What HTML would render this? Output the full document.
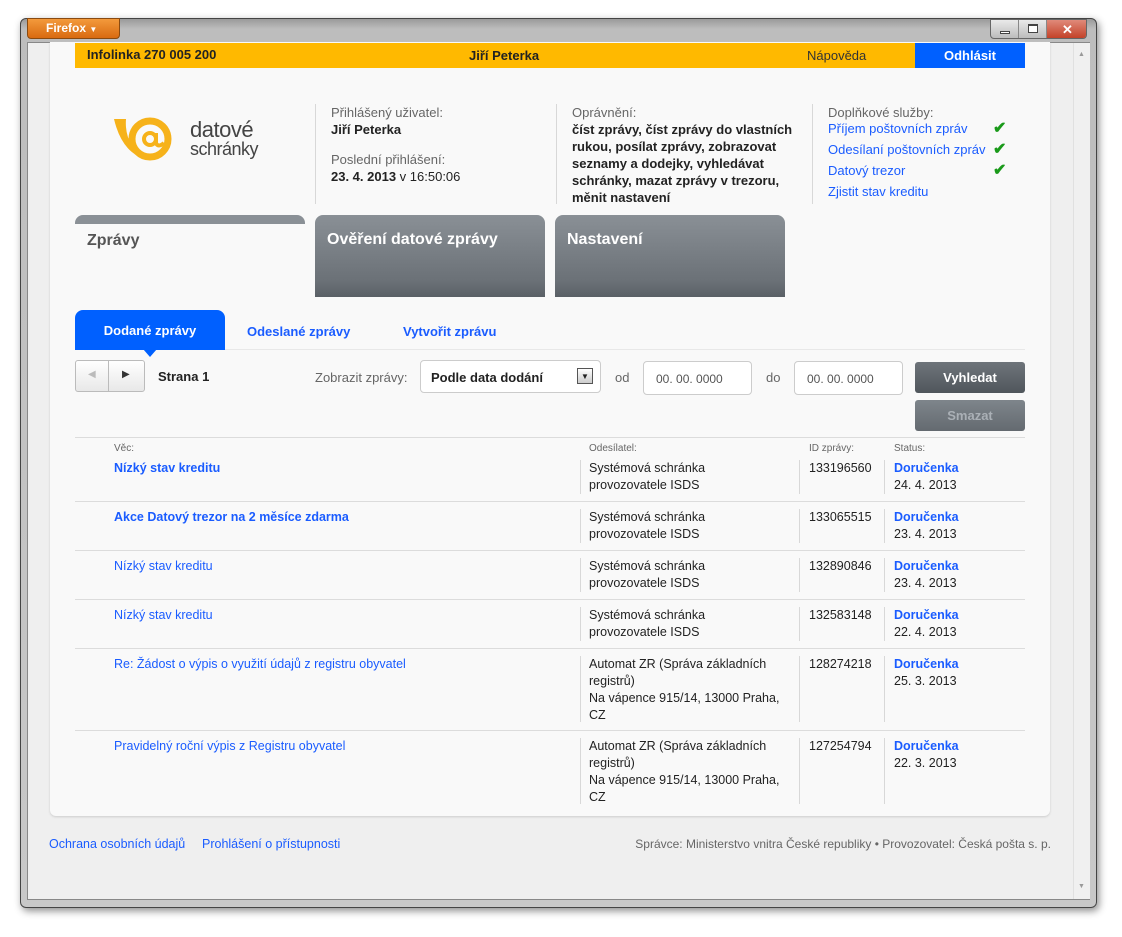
<!DOCTYPE html>
<html><head><meta charset="utf-8"><style>
*{margin:0;padding:0;box-sizing:border-box}
body{width:1122px;height:937px;background:#fff;font-family:"Liberation Sans",Arial,sans-serif;font-size:12px;position:relative;overflow:hidden;color:#222}
.a{position:absolute}
a,.l{color:#1a5cff;text-decoration:none}
.b{font-weight:bold}
.g{color:#666}
.vl{position:absolute;width:1px;background:#d8d8d8}
.hl{position:absolute;height:1px;background:#dcdcdc;left:75px;width:950px}
.tab{position:absolute;top:215px;height:82px;border-radius:8px 8px 0 0;background:linear-gradient(#8a9096,#6b7177 80%,#5a6066);color:#fff;font-size:16px;font-weight:bold;padding:16px 12px}
.inp{position:absolute;top:361px;height:34px;background:#fff;border:1px solid #ccc;border-radius:4px;font-size:12px;color:#555;padding:10px 12px}
.btn{position:absolute;left:915px;width:110px;height:31px;border-radius:3px;background:linear-gradient(#6e747a,#50565c);color:#fff;font-weight:bold;font-size:13px;text-align:center;line-height:31px}
.row{position:absolute;font-size:12.5px;line-height:17px;white-space:nowrap}
</style></head><body>
<div class="a" style="left:20px;top:18px;width:1077px;height:890px;border-radius:6px;background:linear-gradient(#9a9a9a,#bdbdbd 10px,#c8c8c8);border:1px solid #444;box-shadow:2px 3px 8px rgba(0,0,0,.45)"></div>
<div class="a" style="left:27px;top:18px;width:93px;height:21px;background:linear-gradient(#f39a3c,#d96a10);border:1px solid #8a4a10;border-radius:0 0 4px 4px;color:#fff;font-weight:bold;font-size:12px;padding:2px 0 0 18px">Firefox <span style="font-size:8px">▼</span></div>
<div class="a" style="left:990px;top:19px;width:97px;height:20px;border:1px solid #666;border-radius:0 0 4px 4px;background:linear-gradient(#eaeaea,#bcbcbc);overflow:hidden">
<div class="a" style="left:0;top:0;width:28px;height:20px;border-right:1px solid #888"><div class="a" style="left:9px;top:11px;width:10px;height:3px;border:1px solid #444;background:#fff"></div></div>
<div class="a" style="left:28px;top:0;width:28px;height:20px;border-right:1px solid #888"><div class="a" style="left:9px;top:4px;width:10px;height:9px;border:1px solid #444;border-top-width:2px;background:#fff"></div></div>
<div class="a" style="left:56px;top:0;width:41px;height:20px;background:linear-gradient(#e08a7a,#c03a20);color:#fff;text-align:center;font-weight:bold;font-size:13px;line-height:19px">✕</div></div>
<div class="a" style="left:27px;top:42px;width:1063px;height:858px;background:#efefef;border:1px solid #888"></div>
<div class="a" style="left:1073px;top:43px;width:17px;height:856px;background:#f0f0f0;border-left:1px solid #e0e0e0"><div class="a" style="left:4px;top:8px;font-size:7px;color:#999">▲</div><div class="a" style="left:4px;top:840px;font-size:7px;color:#999">▼</div></div>
<div class="a" style="left:50px;top:42px;width:1000px;height:774px;background:#f9f9f9;border-radius:0 0 6px 6px;box-shadow:0 1px 2px #ccc"></div>
<div class="a" style="left:75px;top:43px;width:950px;height:25px;background:#ffb900"></div>
<div class="a b" style="left:87px;top:47px;font-size:13px">Infolinka 270 005 200</div>
<div class="a b" style="left:469px;top:48px;font-size:13px">Jiří Peterka</div>
<div class="a" style="left:807px;top:48px;font-size:13px;color:#333">Nápověda</div>
<div class="a b" style="left:915px;top:43px;width:110px;height:25px;background:#0060ff;color:#fff;text-align:center;line-height:25px;font-size:13px">Odhlásit</div>
<svg class="a" style="left:112px;top:115px" width="80" height="50" viewBox="0 0 80 50">
<path d="M2 4 L14 4 Q12 30 34 44 Q10 38 2 4Z" fill="#f6b21a"/>
<circle cx="38" cy="24" r="18" fill="none" stroke="#f6b21a" stroke-width="7"/>
<circle cx="38" cy="24" r="6" fill="none" stroke="#f6b21a" stroke-width="4"/>
<path d="M44 18 L44 28 Q46 33 52 28" fill="none" stroke="#f6b21a" stroke-width="4"/>
</svg>
<div class="a" style="left:190px;top:117px;font-size:22px;color:#444;letter-spacing:-.5px">datové</div>
<div class="a" style="left:190px;top:139px;font-size:18px;color:#444;letter-spacing:-.5px">schránky</div>
<div class="vl" style="left:315px;top:104px;height:100px"></div>
<div class="vl" style="left:556px;top:104px;height:100px"></div>
<div class="vl" style="left:812px;top:104px;height:100px"></div>
<div class="a" style="left:331px;top:104px;line-height:17px;font-size:13px"><span class="g">Přihlášený uživatel:</span><br><b>Jiří Peterka</b></div>
<div class="a" style="left:331px;top:151px;line-height:17px;font-size:13px"><span class="g">Poslední přihlášení:</span><br><b>23. 4. 2013</b> v 16:50:06</div>
<div class="a" style="left:572px;top:104px;line-height:17px;font-size:13px;width:230px"><span class="g">Oprávnění:</span><br><b>číst zprávy, číst zprávy do vlastních rukou, posílat zprávy, zobrazovat seznamy a dodejky, vyhledávat schránky, mazat zprávy v trezoru, měnit nastavení</b></div>
<div class="a g" style="left:828px;top:104px;font-size:13px;line-height:17px">Doplňkové služby:</div>
<div class="a" style="left:828px;top:118px;line-height:21px;font-size:13px"><span class="l">Příjem poštovních zpráv</span><br><span class="l">Odesílaní poštovních zpráv</span><br><span class="l">Datový trezor</span><br><span class="l">Zjistit stav kreditu</span></div>
<div class="a b" style="left:993px;top:118px;color:#1a9a1a;font-size:16px;line-height:21px">✔<br>✔<br>✔</div>
<div class="a" style="left:75px;top:215px;width:230px;height:9px;border-radius:8px 8px 0 0;background:#8a9096"></div>
<div class="a b" style="left:87px;top:232px;font-size:16px;color:#555">Zprávy</div>
<div class="tab" style="left:315px;width:230px">Ověření datové zprávy</div>
<div class="tab" style="left:555px;width:230px">Nastavení</div>
<div class="a b" style="left:75px;top:310px;width:150px;height:40px;background:#0060ff;border-radius:8px 8px 0 0;color:#fff;font-size:13px;text-align:center;line-height:42px">Dodané zprávy</div>
<div class="a" style="left:143px;top:349px;width:0;height:0;border-left:7px solid transparent;border-right:7px solid transparent;border-top:8px solid #0060ff"></div>
<div class="a" style="left:225px;top:349px;width:800px;height:1px;background:#e8e8e8"></div>
<div class="a b l" style="left:247px;top:324px;font-size:13px">Odeslané zprávy</div>
<div class="a b l" style="left:403px;top:324px;font-size:13px">Vytvořit zprávu</div>
<div class="a" style="left:75px;top:360px;width:70px;height:32px;border:1px solid #bbb;border-radius:3px;background:linear-gradient(#fff,#e8e8e8)"><div class="a" style="left:32px;top:0;width:1px;height:30px;background:#bbb"></div><div class="a" style="left:12px;top:8px;color:#bbb;font-size:10px">◀</div><div class="a" style="left:46px;top:8px;color:#333;font-size:10px">▶</div></div>
<div class="a b" style="left:158px;top:369px;font-size:13px">Strana 1</div>
<div class="a g" style="left:315px;top:370px;font-size:13px">Zobrazit zprávy:</div>
<div class="a" style="left:420px;top:360px;width:181px;height:33px;background:#fff;border:1px solid #ccc;border-radius:4px"><div class="a b" style="left:10px;top:9px;font-size:13px">Podle data dodání</div><div class="a" style="left:156px;top:7px;width:16px;height:16px;border:1px solid #555;background:linear-gradient(#fff,#ccc);font-size:8px;text-align:center;line-height:15px">▼</div></div>
<div class="a g" style="left:615px;top:370px;font-size:13px">od</div>
<div class="inp" style="left:643px;width:109px">00. 00. 0000</div>
<div class="a g" style="left:766px;top:370px;font-size:13px">do</div>
<div class="inp" style="left:794px;width:109px">00. 00. 0000</div>
<div class="btn" style="top:362px">Vyhledat</div>
<div class="btn" style="top:400px;background:linear-gradient(#7e858b,#646a70);color:#aab0b6">Smazat</div>
<div class="hl" style="top:437px"></div>
<div class="a" style="left:114px;top:443px;font-size:10px;color:#666">Věc:</div>
<div class="a" style="left:589px;top:443px;font-size:10px;color:#666">Odesílatel:</div>
<div class="a" style="left:809px;top:443px;font-size:10px;color:#666">ID zprávy:</div>
<div class="a" style="left:894px;top:443px;font-size:10px;color:#666">Status:</div>

<div class="row" style="top:460px;left:114px"><b class="l">Nízký stav kreditu</b></div>
<div class="row" style="top:460px;left:589px">Systémová schránka<br>provozovatele ISDS</div>
<div class="row" style="top:460px;left:809px">133196560</div>
<div class="row" style="top:460px;left:894px"><b class="l">Doručenka</b><br>24. 4. 2013</div>
<div class="hl" style="top:501px"></div>
<div class="row" style="top:509px;left:114px"><b class="l">Akce Datový trezor na 2 měsíce zdarma</b></div>
<div class="row" style="top:509px;left:589px">Systémová schránka<br>provozovatele ISDS</div>
<div class="row" style="top:509px;left:809px">133065515</div>
<div class="row" style="top:509px;left:894px"><b class="l">Doručenka</b><br>23. 4. 2013</div>
<div class="hl" style="top:550px"></div>
<div class="row" style="top:558px;left:114px"><span class="l">Nízký stav kreditu</span></div>
<div class="row" style="top:558px;left:589px">Systémová schránka<br>provozovatele ISDS</div>
<div class="row" style="top:558px;left:809px">132890846</div>
<div class="row" style="top:558px;left:894px"><b class="l">Doručenka</b><br>23. 4. 2013</div>
<div class="hl" style="top:599px"></div>
<div class="row" style="top:607px;left:114px"><span class="l">Nízký stav kreditu</span></div>
<div class="row" style="top:607px;left:589px">Systémová schránka<br>provozovatele ISDS</div>
<div class="row" style="top:607px;left:809px">132583148</div>
<div class="row" style="top:607px;left:894px"><b class="l">Doručenka</b><br>22. 4. 2013</div>
<div class="hl" style="top:648px"></div>
<div class="row" style="top:656px;left:114px"><span class="l">Re: Žádost o výpis o využití údajů z registru obyvatel</span></div>
<div class="row" style="top:656px;left:589px">Automat ZR (Správa základních<br>registrů)<br>Na vápence 915/14, 13000 Praha,<br>CZ</div>
<div class="row" style="top:656px;left:809px">128274218</div>
<div class="row" style="top:656px;left:894px"><b class="l">Doručenka</b><br>25. 3. 2013</div>
<div class="hl" style="top:730px"></div>
<div class="row" style="top:738px;left:114px"><span class="l">Pravidelný roční výpis z Registru obyvatel</span></div>
<div class="row" style="top:738px;left:589px">Automat ZR (Správa základních<br>registrů)<br>Na vápence 915/14, 13000 Praha,<br>CZ</div>
<div class="row" style="top:738px;left:809px">127254794</div>
<div class="row" style="top:738px;left:894px"><b class="l">Doručenka</b><br>22. 3. 2013</div>

<div class="vl" style="left:580px;top:460px;height:34px"></div><div class="vl" style="left:799px;top:460px;height:34px"></div><div class="vl" style="left:884px;top:460px;height:34px"></div>
<div class="vl" style="left:580px;top:509px;height:34px"></div><div class="vl" style="left:799px;top:509px;height:34px"></div><div class="vl" style="left:884px;top:509px;height:34px"></div>
<div class="vl" style="left:580px;top:558px;height:34px"></div><div class="vl" style="left:799px;top:558px;height:34px"></div><div class="vl" style="left:884px;top:558px;height:34px"></div>
<div class="vl" style="left:580px;top:607px;height:34px"></div><div class="vl" style="left:799px;top:607px;height:34px"></div><div class="vl" style="left:884px;top:607px;height:34px"></div>
<div class="vl" style="left:580px;top:656px;height:66px"></div><div class="vl" style="left:799px;top:656px;height:66px"></div><div class="vl" style="left:884px;top:656px;height:66px"></div>
<div class="vl" style="left:580px;top:738px;height:66px"></div><div class="vl" style="left:799px;top:738px;height:66px"></div><div class="vl" style="left:884px;top:738px;height:66px"></div>
<div class="a l" style="left:49px;top:837px;font-size:12.5px">Ochrana osobních údajů</div>
<div class="a l" style="left:202px;top:837px;font-size:12.5px">Prohlášení o přístupnosti</div>
<div class="a" style="left:600px;top:837px;color:#666;width:451px;text-align:right;font-size:12px;white-space:nowrap">Správce: Ministerstvo vnitra České republiky • Provozovatel: Česká pošta s. p.</div>
</body></html>
